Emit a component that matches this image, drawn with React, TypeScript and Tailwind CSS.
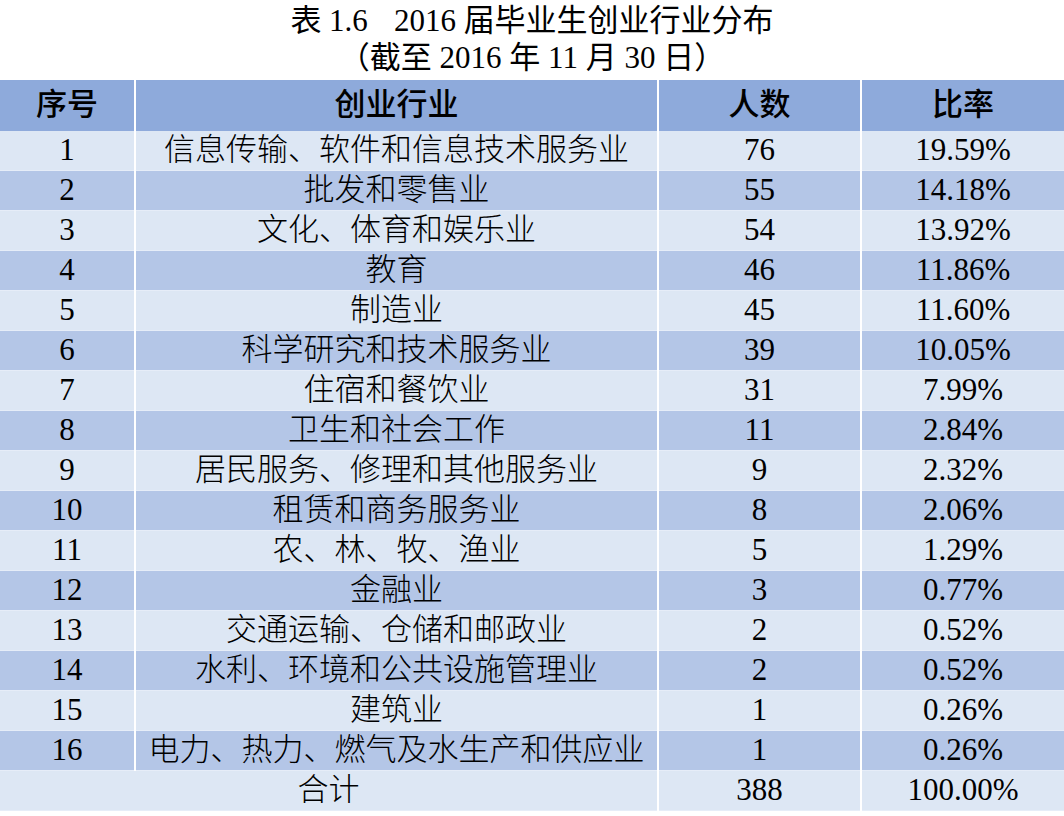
const rows: [string, string, string, string][] = [
  ["1", "信息传输、软件和信息技术服务业", "76", "19.59%"],
  ["2", "批发和零售业", "55", "14.18%"],
  ["3", "文化、体育和娱乐业", "54", "13.92%"],
  ["4", "教育", "46", "11.86%"],
  ["5", "制造业", "45", "11.60%"],
  ["6", "科学研究和技术服务业", "39", "10.05%"],
  ["7", "住宿和餐饮业", "31", "7.99%"],
  ["8", "卫生和社会工作", "11", "2.84%"],
  ["9", "居民服务、修理和其他服务业", "9", "2.32%"],
  ["10", "租赁和商务服务业", "8", "2.06%"],
  ["11", "农、林、牧、渔业", "5", "1.29%"],
  ["12", "金融业", "3", "0.77%"],
  ["13", "交通运输、仓储和邮政业", "2", "0.52%"],
  ["14", "水利、环境和公共设施管理业", "2", "0.52%"],
  ["15", "建筑业", "1", "0.26%"],
  ["16", "电力、热力、燃气及水生产和供应业", "1", "0.26%"],
];

const font = { fontFamily: '"Liberation Serif", "Noto Sans CJK SC", serif' };

function Cell({ children, bg }: { children: React.ReactNode; bg: string }) {
  return (
    <div className={`flex h-[40px] items-center justify-center border-b border-[#e6edf8] ${bg}`}>
      {children}
    </div>
  );
}

export default function App() {
  return (
    <div className="w-[1064px] h-[816px] bg-white text-black" style={font}>
      <div className="pt-[2px] pb-[4px] text-center text-[31px] leading-[37px]">
        <div>
          表 1.6<span className="inline-block w-[26px]" />2016 届毕业生创业行业分布
        </div>
        <div>（截至 2016 年 11 月 30 日）</div>
      </div>

      <div className="bg-white">
        <div className="grid h-[51px] grid-cols-[134px_521px_201px_202px] gap-x-[2px] text-[31px] font-medium">
          {["序号", "创业行业", "人数", "比率"].map((h) => (
            <div key={h} className="flex items-center justify-center bg-[#8eaadb]">
              {h}
            </div>
          ))}
        </div>

        {rows.map((r, i) => {
          const bg = i % 2 === 0 ? "bg-[#dde7f4]" : "bg-[#b4c6e7]";
          return (
            <div
              key={r[0]}
              className="grid grid-cols-[134px_521px_201px_202px] gap-x-[2px] text-[31px] font-light"
            >
              <Cell bg={bg}>{r[0]}</Cell>
              <Cell bg={bg}>{r[1]}</Cell>
              <Cell bg={bg}>{r[2]}</Cell>
              <Cell bg={bg}>{r[3]}</Cell>
            </div>
          );
        })}

        <div className="grid grid-cols-[657px_201px_202px] gap-x-[2px] text-[31px] font-light">
          <Cell bg="bg-[#dde7f4]">合计</Cell>
          <Cell bg="bg-[#dde7f4]">388</Cell>
          <Cell bg="bg-[#dde7f4]">100.00%</Cell>
        </div>
      </div>
    </div>
  );
}
